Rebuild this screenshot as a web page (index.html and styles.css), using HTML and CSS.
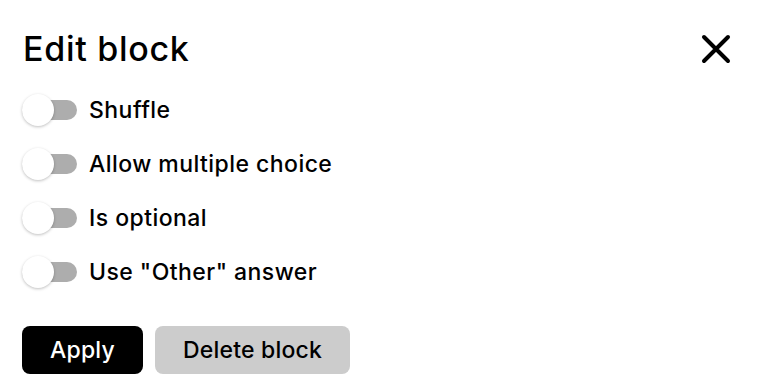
FILE: index.html
```html
<!DOCTYPE html>
<html lang="en">
<head>
    <meta charset="UTF-8">
    <meta name="viewport" content="width=device-width, initial-scale=1.0">
    <title>Edit block</title>
    <link rel="stylesheet" href="styles.css">
</head>
<body>
    <div class="panel">
        <div class="panel-header">
            <h1>Edit block</h1>
            <button class="close" aria-label="Close">
                <svg width="32" height="32" viewBox="0 0 32 32">
                    <path d="M4 4 L28 28 M28 4 L4 28" stroke="#000" stroke-width="4" stroke-linecap="round" fill="none"/>
                </svg>
            </button>
        </div>
        <ul class="options">
            <li><span class="switch"><span class="thumb"></span></span>Shuffle</li>
            <li><span class="switch"><span class="thumb"></span></span>Allow multiple choice</li>
            <li><span class="switch"><span class="thumb"></span></span>Is optional</li>
            <li><span class="switch"><span class="thumb"></span></span>Use "Other" answer</li>
        </ul>
        <div class="actions">
            <button class="btn btn-primary">Apply</button>
            <button class="btn btn-secondary">Delete block</button>
        </div>
    </div>
</body>
</html>
```

FILE: styles.css
```css
body, html {
    margin: 0;
    padding: 0;
    background-color: #ffffff;
    font-family: 'Inter', 'Noto Sans', sans-serif;
    color: #000000;
}
.panel {
    padding: 28px 34px 0 22px;
}
.panel-header {
    display: flex;
    justify-content: space-between;
    align-items: center;
}
.panel-header h1 {
    margin: 0;
    font-size: 34px;
    font-weight: 500;
    letter-spacing: 0.7px;
    line-height: 42px;
    padding-left: 1px;
}
.close {
    background: none;
    border: none;
    padding: 0;
    width: 32px;
    height: 32px;
    cursor: pointer;
}
.options {
    list-style-type: none;
    padding: 0;
    margin: 13px 0 0 0;
}
.options li {
    display: flex;
    align-items: center;
    height: 54px;
    font-size: 23px;
    font-weight: 500;
    letter-spacing: 0.45px;
}
.switch {
    position: relative;
    width: 55px;
    height: 20px;
    margin-right: 12px;
    background-color: #adadad;
    border-radius: 10px;
}
.thumb {
    position: absolute;
    left: 0;
    top: -6px;
    width: 32px;
    height: 32px;
    border-radius: 50%;
    background-color: #ffffff;
    box-shadow: 0 1px 3px rgba(0, 0, 0, 0.25);
}
.actions {
    display: flex;
    gap: 12px;
    margin-top: 27px;
}
.btn {
    font-family: inherit;
    font-size: 23px;
    font-weight: 500;
    letter-spacing: 0.2px;
    height: 48px;
    border: none;
    border-radius: 8px;
    padding: 0 28px;
    cursor: pointer;
}
.btn-primary {
    background-color: #000000;
    color: #ffffff;
}
.btn-secondary {
    background-color: #cccccc;
    color: #000000;
}
```
